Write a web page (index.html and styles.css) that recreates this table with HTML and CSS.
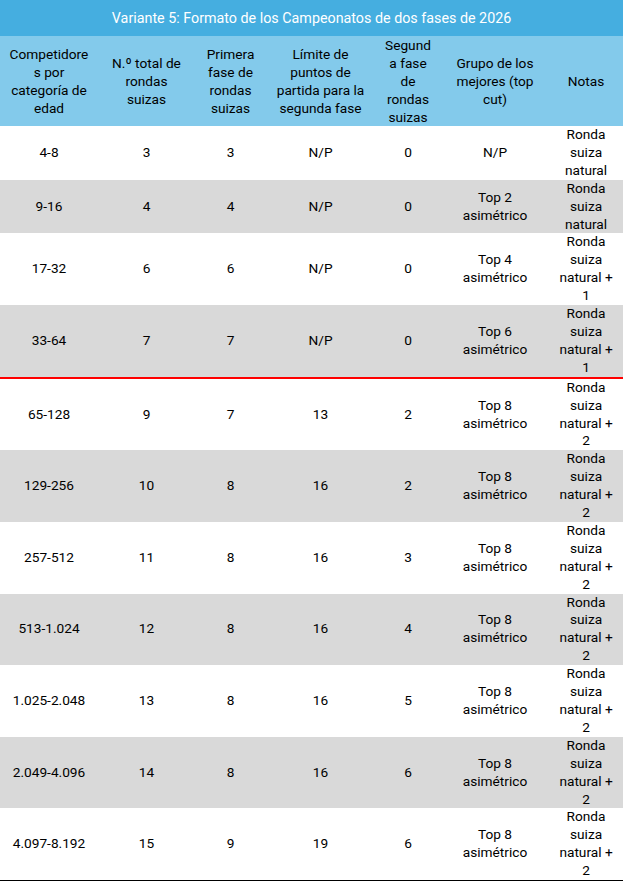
FILE: index.html
```html
<!DOCTYPE html>
<html lang="es">
<head>
<meta charset="utf-8">
<title>Variante 5</title>
<link rel="stylesheet" href="styles.css">
</head>
<body>
<table class="grid">
  <colgroup>
    <col class="c1"><col class="c2"><col class="c3"><col class="c4"><col class="c5"><col class="c6"><col class="c7">
  </colgroup>
  <thead>
    <tr class="title-row"><th colspan="7">Variante 5: Formato de los Campeonatos de dos fases de 2026</th></tr>
    <tr class="head-row">
      <th>Competidore<br>s por<br>categoría de<br>edad</th>
      <th>N.º total de<br>rondas<br>suizas</th>
      <th>Primera<br>fase de<br>rondas<br>suizas</th>
      <th>Límite de<br>puntos de<br>partida para la<br>segunda fase</th>
      <th>Segund<br>a fase<br>de<br>rondas<br>suizas</th>
      <th>Grupo de los<br>mejores (top<br>cut)</th>
      <th>Notas</th>
    </tr>
  </thead>
  <tbody>
    <tr><td>4-8</td><td>3</td><td>3</td><td>N/P</td><td>0</td><td>N/P</td><td>Ronda<br>suiza<br>natural</td></tr>
    <tr class="alt"><td>9-16</td><td>4</td><td>4</td><td>N/P</td><td>0</td><td>Top 2<br>asimétrico</td><td>Ronda<br>suiza<br>natural</td></tr>
    <tr><td>17-32</td><td>6</td><td>6</td><td>N/P</td><td>0</td><td>Top 4<br>asimétrico</td><td>Ronda<br>suiza<br>natural +<br>1</td></tr>
    <tr class="alt cut"><td>33-64</td><td>7</td><td>7</td><td>N/P</td><td>0</td><td>Top 6<br>asimétrico</td><td>Ronda<br>suiza<br>natural +<br>1</td></tr>
    <tr><td>65-128</td><td>9</td><td>7</td><td>13</td><td>2</td><td>Top 8<br>asimétrico</td><td>Ronda<br>suiza<br>natural +<br>2</td></tr>
    <tr class="alt"><td>129-256</td><td>10</td><td>8</td><td>16</td><td>2</td><td>Top 8<br>asimétrico</td><td>Ronda<br>suiza<br>natural +<br>2</td></tr>
    <tr><td>257-512</td><td>11</td><td>8</td><td>16</td><td>3</td><td>Top 8<br>asimétrico</td><td>Ronda<br>suiza<br>natural +<br>2</td></tr>
    <tr class="alt"><td>513-1.024</td><td>12</td><td>8</td><td>16</td><td>4</td><td>Top 8<br>asimétrico</td><td>Ronda<br>suiza<br>natural +<br>2</td></tr>
    <tr><td>1.025-2.048</td><td>13</td><td>8</td><td>16</td><td>5</td><td>Top 8<br>asimétrico</td><td>Ronda<br>suiza<br>natural +<br>2</td></tr>
    <tr class="alt"><td>2.049-4.096</td><td>14</td><td>8</td><td>16</td><td>6</td><td>Top 8<br>asimétrico</td><td>Ronda<br>suiza<br>natural +<br>2</td></tr>
    <tr class="last"><td>4.097-8.192</td><td>15</td><td>9</td><td>19</td><td>6</td><td>Top 8<br>asimétrico</td><td>Ronda<br>suiza<br>natural +<br>2</td></tr>
  </tbody>
</table>
</body>
</html>
```

FILE: styles.css
```css
html, body {
  margin: 0;
  padding: 0;
  background: #ffffff;
}

.grid {
  width: 623px;
  border-collapse: collapse;
  table-layout: fixed;
  font-family: Roboto, "Liberation Sans", sans-serif;
  font-size: 13.7px;
  color: #000000;
}

.c1 { width: 98px; }
.c2 { width: 97px; }
.c3 { width: 71px; }
.c4 { width: 109px; }
.c5 { width: 66px; }
.c6 { width: 108px; }
.c7 { width: 74px; }

.grid th,
.grid td {
  padding: 0 1px;
  text-align: center;
  vertical-align: middle;
  font-weight: normal;
  white-space: nowrap;
}

.title-row th {
  height: 36px;
  background: #45aee0;
  color: #ffffff;
  font-size: 14.3px;
  line-height: 18px;
  padding: 0;
}

.head-row th {
  height: 90px;
  background: #83caeb;
  line-height: 18px;
}

.grid td {
  line-height: 17.9px;
}

.alt td {
  background: #d9d9d9;
}

.cut td {
  border-bottom: 2px solid #ff0000;
}

.last td {
  border-bottom: 1px solid #000000;
}
```
